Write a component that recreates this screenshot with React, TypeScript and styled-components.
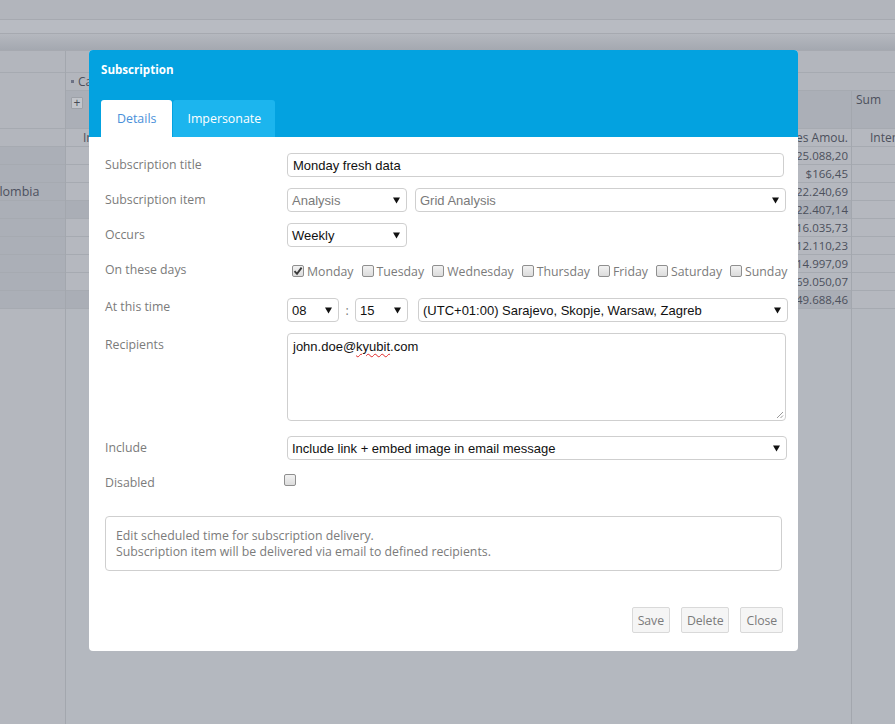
import React from "react"
import styled, { createGlobalStyle } from "styled-components"

const GlobalStyle = createGlobalStyle`
	html, body {
		margin: 0;
		padding: 0;
	}
	body {
		width: 895px;
		height: 724px;
		overflow: hidden;
		background: #b4b8bf;
		font-family: "Open Sans", "Noto Sans", sans-serif;
	}
	* {
		box-sizing: border-box;
	}
`

const Page = styled.div`
	position: relative;
	width: 895px;
	height: 724px;
	overflow: hidden;
	background: #b4b8bf;
	display: flex;
	flex-direction: column;
	color: #4c505c;
	font-size: 12px;
`

/* ---------- dimmed application behind the dialog ---------- */

const Strip = styled.div<{ $h: number; $bg: string }>`
	height: ${(p) => p.$h}px;
	flex-shrink: 0;
	background: ${(p) => p.$bg};
	border-bottom: 1px solid #a6a9b0;
`

const Workspace = styled.div`
	flex: 1;
	display: flex;
	min-height: 0;
`

const LeftPane = styled.div`
	width: 66px;
	flex-shrink: 0;
	border-right: 1px solid #a3a7ae;
	display: flex;
	flex-direction: column;
	background: #b4b7be;
`

const PaneHead = styled.div<{ $h: number }>`
	height: ${(p) => p.$h}px;
	border-bottom: 1px solid #a6aab1;
	background: #b3b6bd;
`

const GridRow = styled.div<{ $dark?: boolean; $bg?: string }>`
	height: 18px;
	border-bottom: 1px solid #a6aab1;
	background: ${(p) => p.$bg ?? (p.$dark ? "#aaaeb6" : "#b5b8bf")};
	display: flex;
	align-items: center;
	white-space: nowrap;
	overflow: hidden;
	line-height: 17px;
`

const CountryName = styled.span`
	margin-left: -16px;
	font-size: 12.5px;
	color: #4d5160;
`

const MainGrid = styled.div`
	flex: 1;
	display: flex;
	flex-direction: column;
	min-width: 0;
`

const CaptionRow = styled.div<{ $h: number }>`
	height: ${(p) => p.$h}px;
	border-bottom: 1px solid #a6aab1;
	background: #b3b6bd;
	display: flex;
	align-items: center;
	padding-left: 5px;
	gap: 4px;
	flex-shrink: 0;
`

const Bullet = styled.span`
	width: 3px;
	height: 3px;
	background: #6d7285;
`

const Columns = styled.div`
	flex: 1;
	display: flex;
`

const MeasureCol = styled.div`
	flex: 1;
	border-right: 1px solid #a3a7ae;
	display: flex;
	flex-direction: column;
`

const SumCol = styled.div`
	width: 43px;
	flex-shrink: 0;
	display: flex;
	flex-direction: column;
`

const HeadBand = styled.div`
	height: 38px;
	border-bottom: 1px solid #a6aab1;
	background: #abafb7;
	padding: 1px 4px;
	flex-shrink: 0;
	line-height: 16px;
`

const PlusButton = styled.span`
	display: flex;
	align-items: center;
	justify-content: center;
	width: 12px;
	height: 12px;
	margin: 5px 0 0 1px;
	border: 1px solid #9da1a8;
	border-radius: 1px;
	background: #c2c5cb;
	font-size: 12px;
	line-height: 1;
	color: #474b56;
`

const HeaderCell = styled(GridRow)`
	justify-content: space-between;
	padding: 0 3px 0 17px;
	background: #b5b8bf;
`

const AmountCell = styled(GridRow)`
	justify-content: flex-end;
	padding-right: 3px;
	font-size: 11.5px;
`

const SumHeader = styled(GridRow)`
	padding-left: 18px;
	background: #b5b8bf;
`

/* ---------- dialog ---------- */

const Dialog = styled.div`
	position: absolute;
	left: 89px;
	top: 50px;
	width: 709px;
	height: 601px;
	background: #ffffff;
	border-radius: 4px;
	overflow: hidden;
	display: flex;
	flex-direction: column;
`

const DialogHeader = styled.div`
	height: 87px;
	background: #03a2e0;
	padding: 12px 12px 0 12px;
	display: flex;
	flex-direction: column;
`

const DialogTitle = styled.div`
	color: #ffffff;
	font-weight: 700;
	font-size: 11.6px;
	line-height: 16px;
`

const Tabs = styled.div`
	display: flex;
	gap: 1px;
	margin-top: 22px;
`

const Tab = styled.div<{ $active?: boolean }>`
	height: 37px;
	padding: 0 ${(p) => (p.$active ? 16 : 14)}px;
	display: flex;
	align-items: center;
	border-radius: 3px 3px 0 0;
	font-size: 12.4px;
	background: ${(p) => (p.$active ? "#ffffff" : "#1cb5ee")};
	color: ${(p) => (p.$active ? "#4a90da" : "#ffffff")};
`

const DialogBody = styled.div`
	flex: 1;
	padding: 16px 12px 0 16px;
	display: flex;
	flex-direction: column;
`

const FormRow = styled.div<{ $mb: number }>`
	display: grid;
	grid-template-columns: 182px 1fr;
	margin-bottom: ${(p) => p.$mb}px;
`

const Label = styled.div`
	color: #7b7b7b;
	font-size: 12.3px;
	line-height: 18px;
	padding-top: 3px;
`

const Control = styled.div`
	display: flex;
	align-items: center;
	min-width: 0;
`

const TextInput = styled.div`
	flex: 1;
	height: 24px;
	margin-right: 2px;
	border: 1px solid #cfcfcf;
	border-radius: 4px;
	padding: 0 5px;
	display: flex;
	align-items: center;
	font-family: "Liberation Sans", Arial, sans-serif;
	font-size: 13px;
	color: #111111;
`

const SelectBox = styled.div<{ $w?: number; $muted?: boolean }>`
	${(p) => (p.$w ? `width: ${p.$w}px; flex-shrink: 0;` : "flex: 1;")}
	height: 24px;
	border: 1px solid #cfcfcf;
	border-radius: 4px;
	padding: 0 6px 0 4px;
	display: flex;
	align-items: center;
	justify-content: space-between;
	font-family: "Liberation Sans", Arial, sans-serif;
	font-size: 13px;
	color: ${(p) => (p.$muted ? "#7a7a7a" : "#111111")};
	white-space: nowrap;
`

const Spacer = styled.span<{ $w: number }>`
	width: ${(p) => p.$w}px;
	flex-shrink: 0;
`

const Colon = styled.span`
	width: 16px;
	text-align: center;
	color: #7b7b7b;
	font-size: 12.3px;
	flex-shrink: 0;
`

const DayList = styled.div`
	display: flex;
	align-items: center;
	height: 24px;
	padding-left: 5px;
	margin-top: 1px;
`

const DayItem = styled.label`
	display: flex;
	align-items: center;
	margin-right: 8px;
	color: #7b7b7b;
	font-size: 12.3px;
`

const Box = styled.span<{ $offset?: number }>`
	width: 12px;
	height: 12px;
	margin-right: 3px;
	margin-left: ${(p) => p.$offset ?? 0}px;
	border: 1px solid #8f8f8f;
	border-radius: 2px;
	background: linear-gradient(180deg, #f2f2f2 0%, #dcdcdc 100%);
	display: flex;
	align-items: center;
	justify-content: center;
	flex-shrink: 0;
`

const TextArea = styled.div`
	position: relative;
	flex: 1;
	height: 88px;
	border: 1px solid #cfcfcf;
	border-radius: 4px;
	padding: 5px 5px;
	font-family: "Liberation Sans", Arial, sans-serif;
	font-size: 13px;
	line-height: 16px;
	color: #111111;
`

const Misspelled = styled.span`
	text-decoration: underline wavy #e02828;
	text-decoration-thickness: 1px;
	text-underline-offset: 2px;
`

const Grip = styled.svg`
	position: absolute;
	right: 1px;
	bottom: 1px;
`

const InfoBox = styled.div`
	margin-top: 24px;
	margin-right: 4px;
	height: 55px;
	border: 1px solid #cfcfcf;
	border-radius: 4px;
	padding: 11px 10px 0 10px;
	color: #7b7b7b;
	font-size: 12.3px;
	line-height: 16px;
`

const Actions = styled.div`
	display: flex;
	justify-content: flex-end;
	gap: 11px;
	margin-top: 36px;
	margin-right: 3px;
`

const Button = styled.button`
	height: 26px;
	padding: 0 5px;
	border: 1px solid #d9d9d9;
	border-radius: 2px;
	background: #f5f5f5;
	color: #7b7b7b;
	font-family: "Open Sans", sans-serif;
	font-size: 12.3px;
	letter-spacing: -0.1px;
`

function Arrow() {
	return (
		<svg width="7" height="7" viewBox="0 0 7 7">
			<polygon points="0,0.5 7,0.5 3.5,6.5" fill="#111" />
		</svg>
	)
}

function Check() {
	return (
		<svg width="10" height="10" viewBox="0 0 10 10">
			<path d="M1.5 5.2 L4 7.8 L8.6 1.6" stroke="#3a3a3a" strokeWidth="1.9" fill="none" />
		</svg>
	)
}

const days = [
	{ name: "Monday", checked: true },
	{ name: "Tuesday", checked: false },
	{ name: "Wednesday", checked: false },
	{ name: "Thursday", checked: false },
	{ name: "Friday", checked: false },
	{ name: "Saturday", checked: false },
	{ name: "Sunday", checked: false },
]

const amounts = [
	"25.088,20",
	"$166,45",
	"22.240,69",
	"22.407,14",
	"16.035,73",
	"12.110,23",
	"14.997,09",
	"69.050,07",
	"49.688,46",
]

const countries = ["Australia", "Canada", "Colombia", "France", "Germany", "Mexico", "Spain", "United Kingdom", "United States"]

export default function App() {
	return (
		<Page>
			<GlobalStyle />
			<Strip $h={20} $bg="#b2b5bc" />
			<Strip $h={14} $bg="#b8bbc2" />
			<Strip $h={17} $bg="linear-gradient(180deg, #b5b8bf 0%, #a4a8b0 100%)" />
			<Workspace>
				<LeftPane>
					<PaneHead $h={22} />
					<PaneHead $h={56} />
					<GridRow $bg="#b3b6bd" />
					{countries.map((c) => (
						<GridRow key={c} $bg="#abafb7">
							{c === "Colombia" && <CountryName>Colombia</CountryName>}
						</GridRow>
					))}
				</LeftPane>
				<MainGrid>
					<CaptionRow $h={22} />
					<CaptionRow $h={18}>
						<Bullet />
						<span>Calendar</span>
					</CaptionRow>
					<Columns>
						<MeasureCol>
							<HeadBand>
								<PlusButton>+</PlusButton>
							</HeadBand>
							<HeaderCell>
								<span>Internet</span>
								<span>Internet Sales Amou.</span>
							</HeaderCell>
							{amounts.map((a, i) => (
								<AmountCell key={a} $dark={i === 3 || i === 8}>
									{a}
								</AmountCell>
							))}
						</MeasureCol>
						<SumCol>
							<HeadBand>
								<span>Sum</span>
							</HeadBand>
							<SumHeader>Inter</SumHeader>
							{amounts.map((a) => (
								<GridRow key={a} />
							))}
						</SumCol>
					</Columns>
				</MainGrid>
			</Workspace>

			<Dialog>
				<DialogHeader>
					<DialogTitle>Subscription</DialogTitle>
					<Tabs>
						<Tab $active>Details</Tab>
						<Tab>Impersonate</Tab>
					</Tabs>
				</DialogHeader>
				<DialogBody>
					<FormRow $mb={11}>
						<Label>Subscription title</Label>
						<Control>
							<TextInput>Monday fresh data</TextInput>
						</Control>
					</FormRow>
					<FormRow $mb={11}>
						<Label>Subscription item</Label>
						<Control>
							<SelectBox $w={120} $muted>
								Analysis
								<Arrow />
							</SelectBox>
							<Spacer $w={8} />
							<SelectBox $muted>
								Grid Analysis
								<Arrow />
							</SelectBox>
						</Control>
					</FormRow>
					<FormRow $mb={11}>
						<Label>Occurs</Label>
						<Control>
							<SelectBox $w={120}>
								Weekly
								<Arrow />
							</SelectBox>
						</Control>
					</FormRow>
					<FormRow $mb={15}>
						<Label>On these days</Label>
						<DayList>
							{days.map((d) => (
								<DayItem key={d.name}>
									<Box>{d.checked && <Check />}</Box>
									{d.name}
								</DayItem>
							))}
						</DayList>
					</FormRow>
					<FormRow $mb={11}>
						<Label style={{ paddingTop: 0 }}>At this time</Label>
						<Control>
							<SelectBox $w={52}>
								08
								<Arrow />
							</SelectBox>
							<Colon>:</Colon>
							<SelectBox $w={53}>
								15
								<Arrow />
							</SelectBox>
							<Spacer $w={10} />
							<SelectBox style={{ marginRight: -2 }}>
								(UTC+01:00) Sarajevo, Skopje, Warsaw, Zagreb
								<Arrow />
							</SelectBox>
						</Control>
					</FormRow>
					<FormRow $mb={15}>
						<Label>Recipients</Label>
						<Control>
							<TextArea>
								john.doe@<Misspelled>kyubit</Misspelled>.com
								<Grip width="9" height="9" viewBox="0 0 9 9">
									<path d="M8 2 L2 8 M8 5.5 L5.5 8" stroke="#9a9a9a" strokeWidth="1" />
								</Grip>
							</TextArea>
						</Control>
					</FormRow>
					<FormRow $mb={11}>
						<Label>Include</Label>
						<Control>
							<SelectBox style={{ marginRight: -1 }}>
								Include link + embed image in email message
								<Arrow />
							</SelectBox>
						</Control>
					</FormRow>
					<FormRow $mb={0}>
						<Label>Disabled</Label>
						<Control style={{ alignItems: "flex-start", paddingTop: 3 }}>
							<Box $offset={-3} />
						</Control>
					</FormRow>
					<InfoBox>
						Edit scheduled time for subscription delivery.
						<br />
						Subscription item will be delivered via email to defined recipients.
					</InfoBox>
					<Actions>
						<Button>Save</Button>
						<Button>Delete</Button>
						<Button>Close</Button>
					</Actions>
				</DialogBody>
			</Dialog>
		</Page>
	)
}
